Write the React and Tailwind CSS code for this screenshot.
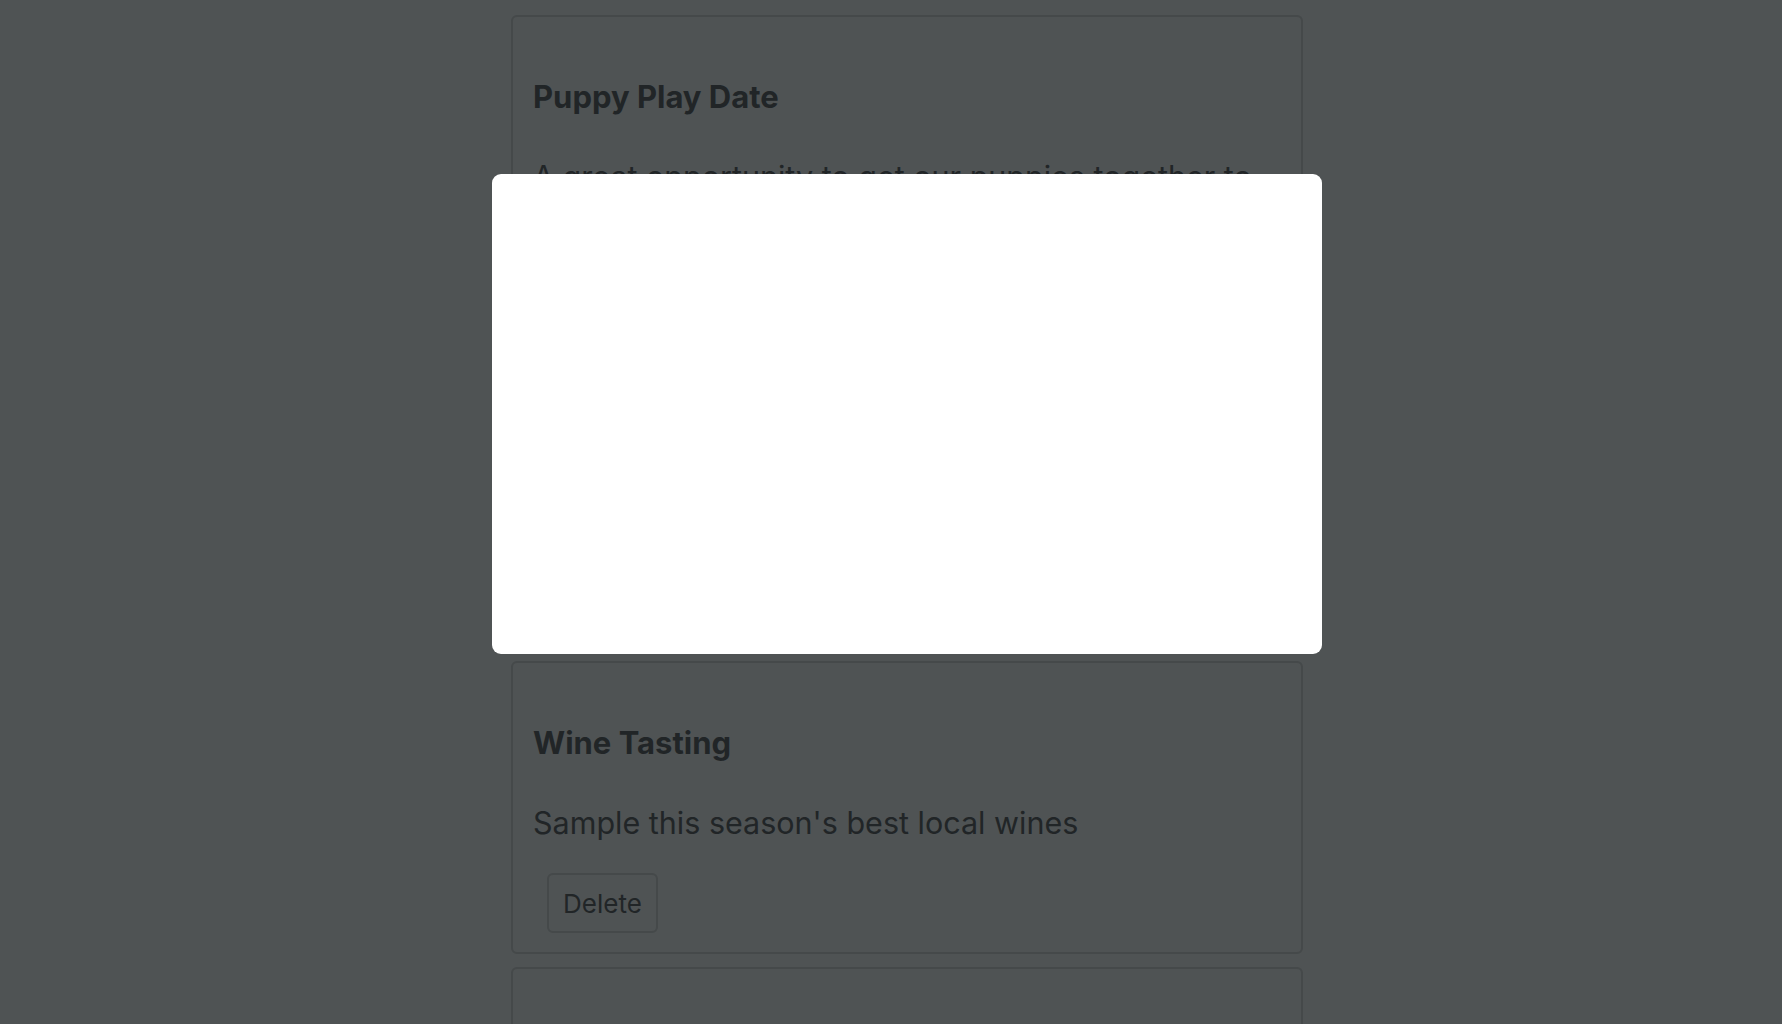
import React from "react";

const events = [
  {
    title: "Puppy Play Date",
    text: "A great opportunity to get our puppies together to play, socialize and make new friends at the park",
    tall: true,
  },
  {
    title: "Wine Tasting",
    text: "Sample this season's best local wines",
  },
  {
    title: "Book Club",
    text: "Discuss this month's pick over coffee",
  },
];

function EventCard({ title, text, tall }) {
  return (
    <div
      className={`border-2 border-[#45494a] rounded-[6px] px-[20px] pt-[20px] pb-[19px] ${
        tall ? "h-[633px]" : ""
      }`}
    >
      <h2 className="mt-[42px] text-[31px] leading-[36px] font-bold text-[#212527]">
        {title}
      </h2>
      <p className="mt-[40px] text-[30.5px] leading-[44px] text-[#212527]">
        {text}
      </p>
      <button className="mt-[28px] ml-[14px] h-[60px] px-[14px] border-2 border-[#45494a] rounded-[6px] text-[26px] text-[#212527]">
        Delete
      </button>
    </div>
  );
}

export default function App() {
  return (
    <div
      className="h-screen overflow-hidden bg-[#4f5354]"
      style={{ fontFamily: "Inter, 'Liberation Sans', sans-serif" }}
    >
      <div className="ml-[511px] w-[792px] pt-[15px] flex flex-col gap-[13px]">
        {events.map((e) => (
          <EventCard key={e.title} {...e} />
        ))}
      </div>

      {/* modal, content not loaded yet */}
      <div className="fixed left-[492px] top-[174px] w-[830px] h-[480px] bg-white rounded-[9px]" />
    </div>
  );
}
